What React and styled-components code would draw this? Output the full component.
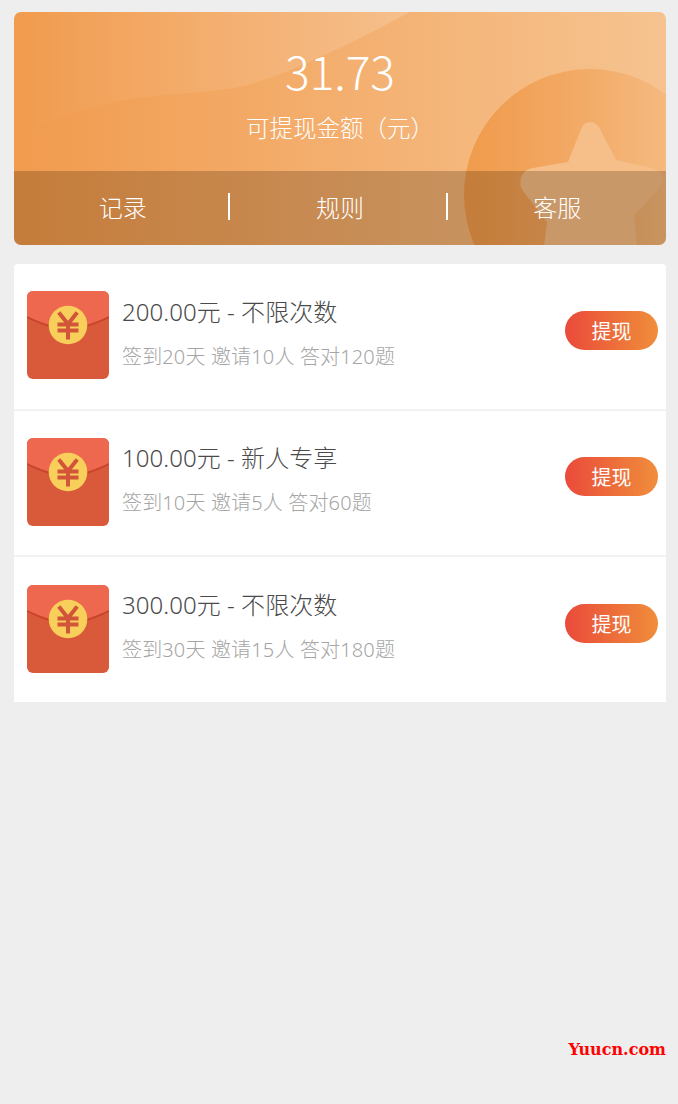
import React from "react";
import styled, { createGlobalStyle } from "styled-components";

const Global = createGlobalStyle`
  html, body { margin: 0; padding: 0; background: #eeeeee; }
  body { font-family: "Noto Sans", "Noto Sans CJK SC", sans-serif; }
  #root { min-height: 1104px; }
`;

const Page = styled.div`
  position: relative;
  width: 678px;
  height: 1104px;
  padding: 12px 12px 0 14px;
  box-sizing: border-box;
  background: #eeeeee;
`;

const Hero = styled.section`
  position: relative;
  overflow: hidden;
  height: 233px;
  border-radius: 7px;
  background: linear-gradient(90deg, #f19b4e 0%, #f6c390 100%);
  display: flex;
  flex-direction: column;
`;

const HeroArt = styled.svg`
  position: absolute;
  inset: 0;
  width: 652px;
  height: 233px;
`;

const Summary = styled.div`
  position: relative;
  height: 159px;
  display: flex;
  flex-direction: column;
  align-items: center;
  color: #fff;
`;

const Amount = styled.div`
  margin-top: 27px;
  font-family: "Noto Sans CJK SC", sans-serif;
  font-weight: 300;
  font-size: 46px;
  line-height: 62px;
`;

const Caption = styled.div`
  margin-top: 11px;
  font-family: "Noto Sans CJK SC", sans-serif;
  font-weight: 300;
  font-size: 23.500px;
  line-height: 30px;
`;

const Tabs = styled.nav`
  position: relative;
  flex: 1;
  display: flex;
  align-items: center;
  background: rgba(60, 30, 0, 0.24);
`;

const Tab = styled.div`
  position: relative;
  flex: 1;
  height: 27px;
  margin-top: -3px;
  display: flex;
  align-items: center;
  justify-content: center;
  color: #fff;
  font-family: "Noto Sans CJK SC", sans-serif;
  font-weight: 300;
  font-size: 24px;
  &:not(:last-child)::after {
    content: "";
    position: absolute;
    right: 1px;
    top: 0;
    bottom: 0;
    width: 2px;
    background: #fff;
  }
`;

const List = styled.section`
  margin-top: 19px;
  background: #fff;
  border-radius: 4px 4px 0 0;
`;

const Row = styled.article`
  height: ${(p) => (p.$last ? "145px" : "146.500px")};
  box-sizing: border-box;
  display: flex;
  align-items: center;
  padding: 0 8px 2px 13px;
  border-bottom: ${(p) => (p.$last ? "none" : "2px solid #f2f2f2")};
`;

const EnvelopeSvg = styled.svg`
  width: 82px;
  height: 88px;
  flex: none;
`;

const Info = styled.div`
  flex: 1;
  margin-left: 13px;
  margin-top: -5px;
`;

const Title = styled.div`
  color: #4a4a4a;
  font-size: 24px;
  line-height: 32px;
  font-weight: 300;
  letter-spacing: 0.05px;
`;

const Meta = styled.div`
  margin-top: 16px;
  color: #a5a5a5;
  font-size: 20px;
  line-height: 26px;
  font-weight: 300;
  letter-spacing: 0.15px;
`;

const Withdraw = styled.button`
  width: 93px;
  height: 39px;
  margin-bottom: 10px;
  padding: 0;
  border: 0;
  border-radius: 20px;
  background: linear-gradient(90deg, #ea4a3a 0%, #f08e3b 100%);
  color: #fff;
  font-family: "Noto Sans CJK SC", sans-serif;
  font-weight: 400;
  font-size: 20px;
`;

const Watermark = styled.div`
  position: absolute;
  right: 12px;
  top: 1040px;
  color: #f00;
  font-family: "DejaVu Serif", serif;
  font-weight: 700;
  font-size: 16px;
  line-height: 20px;
`;

const Envelope = () => (
  <EnvelopeSvg viewBox="0 0 82 88">
    <rect width="82" height="88" rx="6" fill="#d95a3a" />
    <path d="M0 6a6 6 0 0 1 6-6h70a6 6 0 0 1 6 6v19c-12 6-26 11-41 13C26 36 12 31 0 25z" fill="#ee674f" />
    <path d="M0 25c12 6 26 11 41 13 15-2 29-7 41-13v2c-12 6-26 11-41 13C26 38 12 33 0 27z" fill="#c8452c" />
    <circle cx="41" cy="34" r="19.300" fill="#f9cf5b" />
    <path d="M33 23l8 10 8-10M32.500 33.500h17M32.500 39.500h17M41 33v13.500" fill="none" stroke="#d2553a" strokeWidth="4" strokeLinecap="square" />
  </EnvelopeSvg>
);

const rows = [
  { title: "200.00元 - 不限次数", meta: "签到20天 邀请10人 答对120题" },
  { title: "100.00元 - 新人专享", meta: "签到10天 邀请5人 答对60题" },
  { title: "300.00元 - 不限次数", meta: "签到30天 邀请15人 答对180题" },
];

export default function App() {
  return (
    <Page>
      <Global />
      <Hero>
        <HeroArt viewBox="0 0 652 233">
          <defs>
            <linearGradient id="wave" x1="0" x2="1" y1="0" y2="0">
              <stop offset="0" stopColor="#fff" stopOpacity="0" />
              <stop offset="1" stopColor="#fff" stopOpacity="0.16" />
            </linearGradient>
            <linearGradient id="disc" x1="0" x2="1" y1="0" y2="0">
              <stop offset="0" stopColor="#f09a4a" stopOpacity="0.95" />
              <stop offset="1" stopColor="#f09a4a" stopOpacity="0.05" />
            </linearGradient>
          </defs>
          <path d="M0 134C30 104 90 90 130 85 170 81 200 80 225 75 270 65 340 30 396 0H0z" fill="url(#wave)" />
          <circle cx="576" cy="183" r="126" fill="url(#disc)" />
          <path d="M576 110c6 0 10 5 12 11l14 27 36 8c8 2 12 8 10 14-1 4-3 7-6 10l-22 24 4 39h-95l4-33-24-31c-3-4-3-9-2-13 2-6 6-9 12-10l35-6 12-30c2-6 5-10 10-10z" fill="#f6bf8a" />
        </HeroArt>
        <Summary>
          <Amount>31.73</Amount>
          <Caption>可提现金额（元）</Caption>
        </Summary>
        <Tabs>
          <Tab>记录</Tab>
          <Tab>规则</Tab>
          <Tab>客服</Tab>
        </Tabs>
      </Hero>
      <List>
        {rows.map((r, i) => (
          <Row key={r.title} $last={i === rows.length - 1}>
            <Envelope />
            <Info>
              <Title>{r.title}</Title>
              <Meta>{r.meta}</Meta>
            </Info>
            <Withdraw>提现</Withdraw>
          </Row>
        ))}
      </List>
      <Watermark>Yuucn.com</Watermark>
    </Page>
  );
}
